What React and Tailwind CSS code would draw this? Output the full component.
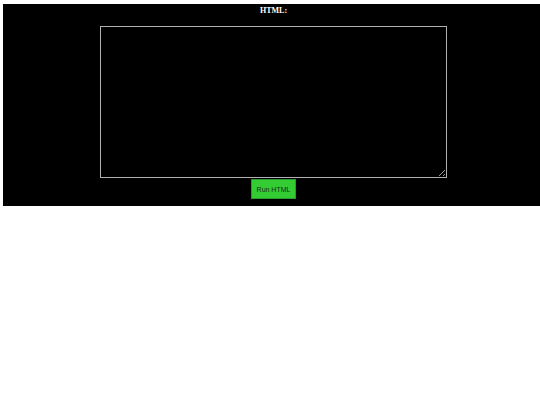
import React, { useState } from 'react';

export default function App() {
  const [html, setHtml] = useState("");

  return (
    <div className="pl-[3px] pt-[4px] bg-white min-h-[405px]">
      <div className="bg-black h-[202px] pl-[4px] flex flex-col items-center">
        <label
          htmlFor="html-input"
          className="block text-white font-bold text-[8px] leading-[10px] mt-[2px] [font-family:'Liberation_Serif',serif]"
        >
          HTML:
        </label>
        <textarea
          id="html-input"
          value={html}
          onChange={(e) => setHtml(e.target.value)}
          className="mt-[10px] w-[347px] h-[152px] bg-black text-white border border-[#b0b0b0] outline-none block text-[8px] [font-family:'Liberation_Mono',monospace]"
        />
        <button
          type="button"
          className="mt-[1px] h-[20px] px-[5px] bg-[#33cc33] border border-[#2a9a2a] text-[#1a2e1a] text-[7px] leading-none [font-family:'Liberation_Sans',sans-serif]"
        >
          Run HTML
        </button>
      </div>
    </div>
  );
}
